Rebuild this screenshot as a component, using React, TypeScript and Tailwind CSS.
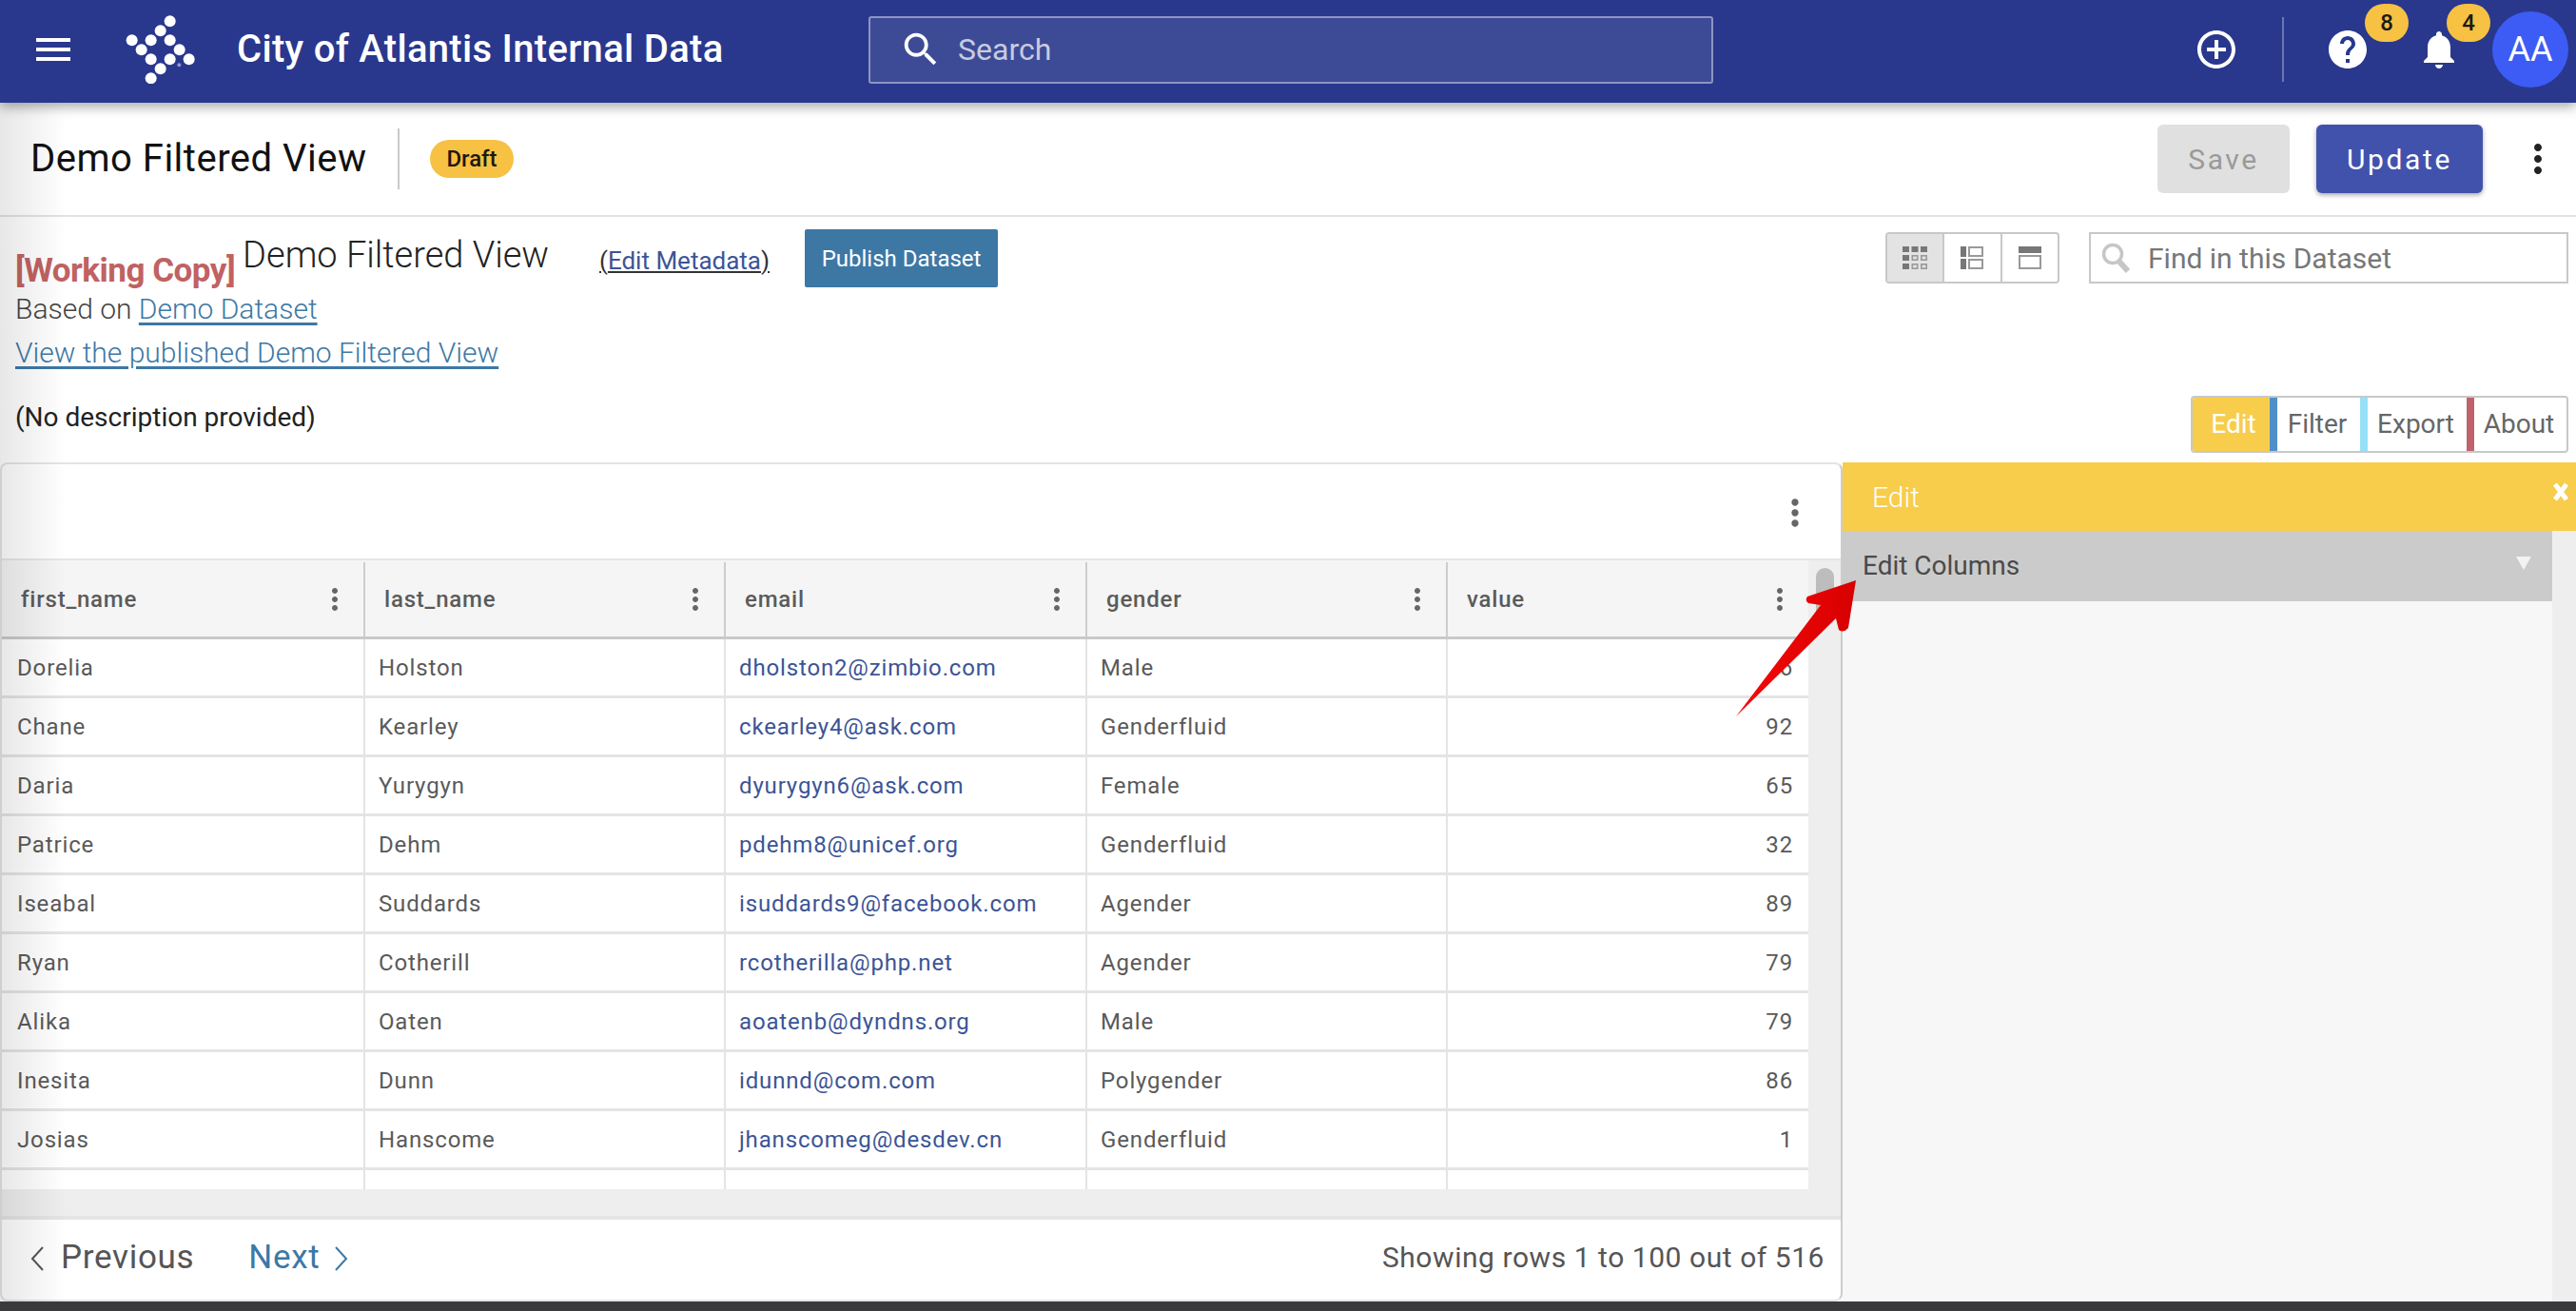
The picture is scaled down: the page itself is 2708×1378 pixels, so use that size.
import React from "react";

const P = {
  search: "M15.5 14h-.79l-.28-.27C15.41 12.59 16 11.11 16 9.5 16 5.91 13.09 3 9.5 3S3 5.91 3 9.5 5.91 16 9.5 16c1.61 0 3.09-.59 4.23-1.57l.27.28v.79l5 4.99L20.49 19l-4.99-5zm-6 0C7.01 14 5 11.99 5 9.5S7.01 5 9.5 5 14 7.01 14 9.5 11.99 14 9.5 14z",
  help: "M12 2C6.48 2 2 6.48 2 12s4.48 10 10 10 10-4.48 10-10S17.52 2 12 2zm1 17h-2v-2h2v2zm2.07-7.75l-.9.92C13.45 12.9 13 13.5 13 15h-2v-.5c0-1.1.45-2.1 1.17-2.83l1.24-1.26c.37-.36.59-.86.59-1.41 0-1.1-.9-2-2-2s-2 .9-2 2H8c0-2.21 1.79-4 4-4s4 1.79 4 4c0 .88-.36 1.68-.93 2.25z",
  bell: "M12 22c1.1 0 2-.9 2-2h-4c0 1.1.89 2 2 2zm6-6v-5c0-3.07-1.64-5.64-4.5-6.32V4c0-.83-.67-1.5-1.5-1.5s-1.5.67-1.5 1.5v.68C7.63 5.36 6 7.92 6 11v5l-2 2v1h16v-1l-2-2z",
  add: "M13 7h-2v4H7v2h4v4h2v-4h4v-2h-4V7zm-1-5C6.48 2 2 6.48 2 12s4.48 10 10 10 10-4.48 10-10S17.52 2 12 2zm0 18c-4.41 0-8-3.59-8-8s3.59-8 8-8 8 3.59 8 8-3.59 8-8 8z",
  more: "M12 8c1.1 0 2-.9 2-2s-.9-2-2-2-2 .9-2 2 .9 2 2 2zm0 2c-1.1 0-2 .9-2 2s.9 2 2 2 2-.9 2-2-.9-2-2-2zm0 6c-1.1 0-2 .9-2 2s.9 2 2 2 2-.9 2-2-.9-2-2-2z",
  menu: "M3 18h18v-2H3v2zm0-5h18v-2H3v2zm0-7v2h18V6H3z",
};

function I({ d, className }: { d: string; className: string }) {
  return (
    <svg viewBox="0 0 24 24" className={className} fill="currentColor">
      <path d={d} />
    </svg>
  );
}

const dots = [
  [233, 64], [203, 94], [113, 124], [173, 124], [233, 124], [143, 154],
  [263, 154], [173, 184], [233, 184], [293, 184], [203, 214], [173, 244],
];

const rows = [
  ["Dorelia", "Holston", "dholston2@zimbio.com", "Male", "6"],
  ["Chane", "Kearley", "ckearley4@ask.com", "Genderfluid", "92"],
  ["Daria", "Yurygyn", "dyurygyn6@ask.com", "Female", "65"],
  ["Patrice", "Dehm", "pdehm8@unicef.org", "Genderfluid", "32"],
  ["Iseabal", "Suddards", "isuddards9@facebook.com", "Agender", "89"],
  ["Ryan", "Cotherill", "rcotherilla@php.net", "Agender", "79"],
  ["Alika", "Oaten", "aoatenb@dyndns.org", "Male", "79"],
  ["Inesita", "Dunn", "idunnd@com.com", "Polygender", "86"],
  ["Josias", "Hanscome", "jhanscomeg@desdev.cn", "Genderfluid", "1"],
];

const cols = ["first_name", "last_name", "email", "gender", "value"];

export default function App() {
  return (
    <div className="relative w-[2708px] h-[1378px] overflow-hidden bg-white font-['Roboto',sans-serif] flex flex-col">
      {/* top bar */}
      <header className="relative z-10 h-[108px] shrink-0 pb-[4px] bg-[#29388d] shadow-[0_4px_12px_rgba(0,0,0,0.35)] flex items-center text-white">
        <I d={P.menu} className="shrink-0 ml-[32px] w-[48px] h-[48px]" />
        <svg viewBox="96 15 110 72" className="shrink-0 ml-[17px] w-[110px] h-[72px]" fill="#fff">
          {dots.map(([x, y]) => (
            <circle key={`${x}-${y}`} cx={100 + x / 3} cy={y / 3} r={6} />
          ))}
          <circle cx={187.3} cy={67.3} r={2} fill="#8f9ac8" />
        </svg>
        <div className="shrink-0 ml-[42px] w-[664px] text-[40px] font-medium tracking-[0.3px] whitespace-nowrap">City of Atlantis Internal Data</div>
        <div className="shrink-0 w-[888px] h-[71px] rounded-[3px] border-2 border-[#8d95c1] bg-[#3d4b96] flex items-center text-[#c8cbe0]">
          <I d={P.search} className="ml-[30px] w-[46px] h-[46px] text-white" />
          <span className="ml-[16px] text-[32px]">Search</span>
        </div>
        <I d={P.add} className="shrink-0 ml-[505px] w-[48px] h-[48px]" />
        <div className="shrink-0 ml-[45px] w-[2px] h-[68px] bg-[#6d77ae]" />
        <div className="relative shrink-0 ml-[43px] w-[48px] h-[48px]">
          <I d={P.help} className="w-[48px] h-[48px]" />
          <div className="absolute -top-[24px] left-[42px] w-[46px] h-[40px] rounded-full bg-[#f7c143] flex items-center justify-center text-[24px] font-medium text-[#1c1a10]">8</div>
        </div>
        <div className="relative shrink-0 ml-[48px] w-[48px] h-[48px]">
          <I d={P.bell} className="w-[48px] h-[48px]" />
          <div className="absolute -top-[24px] left-[32px] w-[46px] h-[40px] rounded-full bg-[#f7c143] flex items-center justify-center text-[24px] font-medium text-[#1c1a10]">4</div>
        </div>
        <div className="shrink-0 ml-[32px] w-[80px] h-[80px] rounded-full bg-[#3d5cf5] flex items-center justify-center text-[36px]">AA</div>
      </header>

      {/* title bar */}
      <div className="h-[120px] shrink-0 border-b-2 border-[#e2e2e2] flex items-center">
        <div className="ml-[32px] w-[386px] text-[40px] tracking-[0.5px] text-[#111] whitespace-nowrap">Demo Filtered View</div>
        <div className="w-[2px] h-[64px] bg-[#c9c9c9]" />
        <div className="ml-[32px] w-[88px] h-[40px] rounded-full bg-[#f7c143] flex items-center justify-center text-[24px] font-medium text-[#1c1a10]">Draft</div>
        <div className="ml-auto w-[139px] h-[72px] rounded-[6px] bg-[#e0e0e0] flex items-center justify-center text-[30px] tracking-[2.6px] text-[#9a9a9a]">Save</div>
        <div className="ml-[28px] w-[175px] h-[72px] rounded-[6px] bg-[#4152ad] shadow-[0_2px_5px_rgba(0,0,0,0.35)] flex items-center justify-center text-[30px] tracking-[2.6px] text-white">Update</div>
        <I d={P.more} className="ml-[34px] mr-[16px] w-[48px] h-[48px] text-[#222]" />
      </div>

      {/* dataset info */}
      <div className="h-[258px] shrink-0 flex">
        <div className="pl-[16px] pt-[13px] flex-1">
          <div className="h-[61px] flex">
            <span className="mt-[22px] text-[35px] leading-[44px] font-bold text-[#c06262] tracking-[-0.5px] whitespace-nowrap">[Working Copy]</span>
            <span className="ml-[8px] mt-[2px] text-[38px] leading-[50px] font-light text-[#222] whitespace-nowrap">Demo Filtered View</span>
            <span className="ml-[53px] mt-[15px] text-[26px] leading-[36px] text-[#333] underline underline-offset-2 whitespace-nowrap">(<span className="text-[#3c5496]">Edit Metadata</span>)</span>
            <div className="ml-[37px] w-[203px] h-[61px] rounded-[2px] bg-[#3d78a5] flex items-center justify-center text-[24px] text-white">Publish Dataset</div>
          </div>
          <div className="mt-[5px] text-[30px] leading-[36px] font-light text-[#444]">
            Based on <span className="text-[#3d78a5] underline underline-offset-4">Demo Dataset</span>
          </div>
          <div className="mt-[10px] text-[30px] leading-[36px] font-light text-[#3d78a5] underline underline-offset-4">View the published Demo Filtered View</div>
          <div className="mt-[32px] text-[28px] leading-[36px] text-[#222]">(No description provided)</div>
        </div>
        <div className="w-[726px] pr-[8px] pt-[16px] flex flex-col items-end">
          <div className="flex">
            <div className="w-[183px] h-[54px] rounded-[4px] border-2 border-[#c8c8c8] flex overflow-hidden">
              <div className="flex-1 bg-[#e3e3e3] flex items-center justify-center">
                <svg viewBox="0 0 26 24" className="w-[28px] h-[24px]" fill="#777">
                  <rect x="0" y="0" width="7" height="6" /><rect x="9.5" y="0" width="7" height="6" /><rect x="19" y="0" width="7" height="6" />
                  <rect x="0" y="9" width="7" height="6" /><rect x="0" y="18" width="7" height="6" />
                  <g fill="none" stroke="#999" strokeWidth="1.6">
                    <rect x="10.3" y="9.8" width="5.4" height="4.4" /><rect x="19.8" y="9.8" width="5.4" height="4.4" />
                    <rect x="10.3" y="18.8" width="5.4" height="4.4" /><rect x="19.8" y="18.8" width="5.4" height="4.4" />
                  </g>
                </svg>
              </div>
              <div className="flex-1 border-l-2 border-[#c8c8c8] flex items-center justify-center">
                <svg viewBox="0 0 24 24" className="w-[24px] h-[24px]" fill="#777">
                  <rect x="0" y="0" width="6" height="11" /><rect x="0" y="13" width="6" height="11" />
                  <g fill="none" stroke="#999" strokeWidth="2">
                    <rect x="9" y="1" width="14" height="9" /><rect x="9" y="14" width="14" height="9" />
                  </g>
                </svg>
              </div>
              <div className="flex-1 border-l-2 border-[#c8c8c8] flex items-center justify-center">
                <svg viewBox="0 0 24 24" className="w-[24px] h-[24px]" fill="#777">
                  <rect x="0" y="0" width="24" height="7" />
                  <rect x="1" y="10" width="22" height="13" fill="none" stroke="#999" strokeWidth="2" />
                </svg>
              </div>
            </div>
            <div className="ml-[31px] w-[504px] h-[54px] border-2 border-[#c8c8c8] flex items-center">
              <svg viewBox="0 0 32 32" className="ml-[10px] w-[32px] h-[32px]" fill="none" stroke="#c6c6c6">
                <circle cx="13" cy="12" r="9.5" strokeWidth="3.5" />
                <path d="M20 20l9 10" strokeWidth="6" />
              </svg>
              <span className="ml-[18px] text-[30px] text-[#777]">Find in this Dataset</span>
            </div>
          </div>
          <div className="mt-[118px] w-[397px] h-[60px] rounded-[4px] border-2 border-[#c8c8c8] flex text-[28px] text-[#666] overflow-hidden">
            <div className="w-[81px] pl-[5px] bg-[#f8cd4b] text-white flex items-center justify-center">Edit</div>
            <div className="w-[8px] bg-[#4f8fc9]" />
            <div className="w-[87px] pr-[3px] flex items-center justify-center">Filter</div>
            <div className="w-[8px] bg-[#98e0f8]" />
            <div className="w-[104px] pr-[3px] flex items-center justify-center">Export</div>
            <div className="w-[8px] bg-[#c0626c]" />
            <div className="flex-1 pr-[3px] flex items-center justify-center">About</div>
          </div>
        </div>
      </div>

      {/* main */}
      <div className="flex-1 min-h-0 flex">
        <div className="w-[1937px] shrink-0 rounded-t-[8px] rounded-b-[8px] border-2 border-[#e4e4e4] border-r-[#cccccc] bg-white flex flex-col overflow-hidden">
          <div className="h-[101px] shrink-0 pt-[3px] border-b-2 border-[#e6e6e6] flex items-center justify-end">
            <I d={P.more} className="mr-[26px] w-[44px] h-[44px] text-[#666]" />
          </div>
          <div className="h-[661px] shrink-0 flex">
            <div className="w-[1899px] flex flex-col overflow-hidden bg-white">
              <div className="h-[83px] shrink-0 pt-[2px] bg-[#f5f5f5] border-b-[3px] border-[#c9c9c9] grid grid-cols-[380px_379px_380px_379px_381px]">
                {cols.map((c, i) => (
                  <div key={c} className={i ? "flex items-center pl-[20px] border-l-2 border-[#cdcdcd]" : "flex items-center pl-[20px]"}>
                    <span className="text-[24px] font-medium text-[#5b5b5b] tracking-[0.8px]">{c}</span>
                    <I d={P.more} className="ml-auto mr-[12px] w-[36px] h-[36px] text-[#666]" />
                  </div>
                ))}
              </div>
              {rows.map((r) => (
                <div key={r[2]} className="h-[62px] shrink-0 border-b-[3px] border-[#e4e4e4] grid grid-cols-[380px_379px_380px_379px_381px] text-[24px] tracking-[0.85px] text-[#5a5a5a]">
                  <div className="flex items-center pl-[16px]">{r[0]}</div>
                  <div className="flex items-center pl-[14px] border-l-2 border-[#e4e4e4]">{r[1]}</div>
                  <div className="flex items-center pl-[14px] border-l-2 border-[#e4e4e4] text-[#3c5496]">{r[2]}</div>
                  <div className="flex items-center pl-[14px] border-l-2 border-[#e4e4e4]">{r[3]}</div>
                  <div className="flex items-center justify-end pr-[16px] border-l-2 border-[#e4e4e4]">{r[4]}</div>
                </div>
              ))}
              <div className="h-[20px] shrink-0 grid grid-cols-[380px_379px_380px_379px_381px]">
                <div />
                <div className="border-l-2 border-[#e4e4e4]" />
                <div className="border-l-2 border-[#e4e4e4]" />
                <div className="border-l-2 border-[#e4e4e4]" />
                <div className="border-l-2 border-[#e4e4e4]" />
              </div>
            </div>
            <div className="flex-1 bg-[#eeeeee] flex justify-center">
              <div className="mt-[8px] w-[19px] h-[60px] rounded-full bg-[#bdbdbd]" />
            </div>
          </div>
          <div className="h-[32px] shrink-0 bg-[#eeeeee] border-b-[4px] border-[#e4e4e4]" />
          <div className="flex-1 pb-[3px] flex items-center text-[35px] text-[#555]">
            <svg viewBox="0 0 16 28" className="ml-[29px] w-[16px] h-[28px]" fill="none" stroke="#555" strokeWidth="2"><path d="M14 2L3 14l11 12" /></svg>
            <span className="ml-[17px] tracking-[0.7px]">Previous</span>
            <span className="ml-[57px] text-[#3d78a5] tracking-[0.7px]">Next</span>
            <svg viewBox="0 0 16 28" className="ml-[14px] w-[16px] h-[28px]" fill="none" stroke="#3d78a5" strokeWidth="2"><path d="M2 2l11 12L2 26" /></svg>
            <span className="ml-auto mr-[17px] mb-[3px] text-[30px] tracking-[0.55px]">Showing rows 1 to 100 out of 516</span>
          </div>
        </div>
        <div className="flex-1 flex flex-col bg-[#eeeeee]">
          <div className="h-[72px] shrink-0 bg-[#f8cd4b] flex items-center text-white">
            <span className="ml-[31px] text-[30px] font-light">Edit</span>
            <svg viewBox="0 0 16 20" className="ml-auto mr-[8px] mb-[10px] w-[16px] h-[20px]" fill="none" stroke="#fff" strokeWidth="5"><path d="M2 2l12 16M14 2L2 18" /></svg>
          </div>
          <div className="flex-1 mr-[25px] bg-[#f7f7f7]">
            <div className="h-[74px] bg-[#cbcbcb] flex items-center">
              <span className="ml-[21px] text-[28px] text-[#4a4a4a]">Edit Columns</span>
              <svg viewBox="0 0 16 14" className="ml-auto mr-[22px] mb-[6px] w-[16px] h-[14px]" fill="#f2f2f2"><path d="M0 0h16L8 14z" /></svg>
            </div>
          </div>
        </div>
      </div>

      {/* bottom window strip */}
      <div className="h-[10px] shrink-0 bg-[#3a3a3c]" />

      {/* left edge shade */}
      <div className="absolute left-0 top-[108px] bottom-[10px] w-[70px] bg-gradient-to-r from-[#00000018] to-transparent pointer-events-none" />

      {/* annotation arrow */}
      <svg className="absolute left-[1800px] top-[590px] w-[170px] h-[180px]" viewBox="1800 590 170 180">
        <defs>
          <linearGradient id="ar" x1="0" y1="0" x2="1" y2="0.2">
            <stop offset="0" stopColor="#ff0a0a" />
            <stop offset="1" stopColor="#d60000" />
          </linearGradient>
        </defs>
        <path
          d="M1825 753 L1914 636 L1901 634 Q1897 631 1900 627 L1951 610 L1943 660 Q1938 666 1933 662 L1930 650 Z"
          fill="url(#ar)"
        />
      </svg>
    </div>
  );
}
